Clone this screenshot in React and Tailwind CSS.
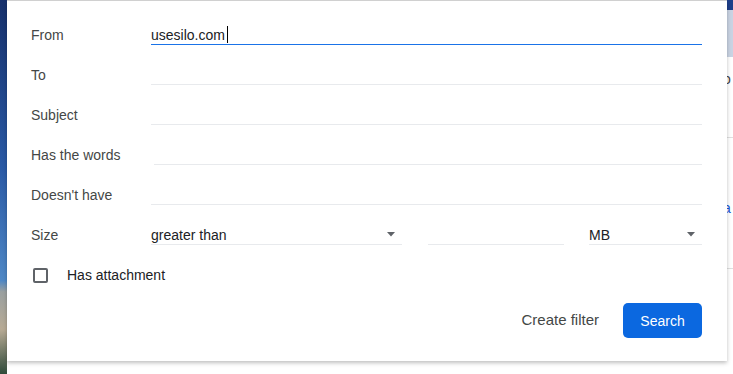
import { useState } from "react";

const font = { fontFamily: '"Liberation Sans", Arial, sans-serif' };

function Row({ label, children }) {
  return (
    <div className="flex h-10 items-center">
      <div className="w-[120px] shrink-0 text-sm text-[#444746]">{label}</div>
      <div className="flex-1">{children}</div>
    </div>
  );
}

function Line({ className = "", children }) {
  return (
    <div className={"flex h-5 items-center border-b border-[#e8eaed] text-sm text-[#202124] " + className}>
      {children}
    </div>
  );
}

function Caret() {
  return (
    <svg width="8" height="5" viewBox="0 0 8 5" className="ml-auto mr-[7px]">
      <path d="M0 0h8L4 4.5z" fill="#5f6368" />
    </svg>
  );
}

export default function App() {
  const [checked, setChecked] = useState(false);

  return (
    <div className="relative h-[374px] w-[733px] overflow-hidden bg-white" style={font}>
      {/* page behind the dialog */}
      <div className="flex h-full">
        <div className="w-[7px] bg-[linear-gradient(180deg,#16306b_0%,#2a5aa6_45%,#4f88c6_75%,#9aa0a0_78%,#b8ab95_88%,#2f4a3a_100%)]" />
        <div className="flex-1" />
        <div className="flex w-[6px] flex-col overflow-hidden text-sm">
          <div className="h-[10px] bg-[#1e3f8a]" />
          <div className="h-[47px] bg-[#c9d3e3]" />
          <div className="mt-[12px] -ml-[4px] text-[#444]">o</div>
          <div className="mt-[48px] h-px bg-[#e0e0e0]" />
          <div className="mt-[60px] -ml-[4px] text-[#1a56d6]">a</div>
          <div className="mt-[50px] h-px bg-[#e0e0e0]" />
        </div>
      </div>

      {/* search options dialog */}
      <div className="absolute left-[7px] top-0 h-[361px] w-[720px] border-t border-[#d0d0d0] bg-white pl-6 pr-[25px] pt-[14px] shadow-[0_2px_4px_rgba(0,0,0,0.25)]">
        <Row label="From">
          <div className="flex h-5 items-center border-b border-[#1a73e8] text-sm text-[#202124]">
            usesilo.com
            <span className="ml-[2px] inline-block h-[17px] w-px bg-black" />
          </div>
        </Row>
        <Row label="To">
          <Line />
        </Row>
        <Row label="Subject">
          <Line />
        </Row>
        <Row label="Has the words">
          <Line className="ml-[3px]" />
        </Row>
        <Row label="Doesn't have">
          <Line />
        </Row>
        <Row label="Size">
          <div className="flex items-center">
            <Line className="w-[251px]">
              greater than
              <Caret />
            </Line>
            <Line className="ml-[26px] w-[136px]" />
            <Line className="ml-[25px] flex-1">
              MB
              <Caret />
            </Line>
          </div>
        </Row>
        <div className="flex h-10 items-center">
          <button
            type="button"
            onClick={() => setChecked(!checked)}
            className="ml-[2px] h-[15px] w-[15px] rounded-[2px] border-2 border-[#5f6368]"
          />
          <span className="ml-[19px] text-sm text-[#202124]">Has attachment</span>
        </div>
        <div className="mt-2 flex items-center justify-end">
          <button type="button" className="mr-6 text-[15px] text-[#444746]">
            Create filter
          </button>
          <button
            type="button"
            className="h-[35px] w-[79px] rounded-[5px] bg-[#0b68e0] text-sm text-white"
          >
            Search
          </button>
        </div>
      </div>
    </div>
  );
}
